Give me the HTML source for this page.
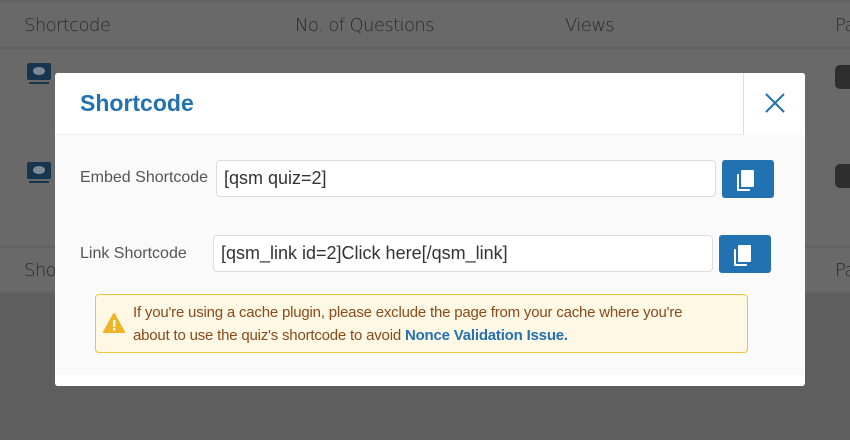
<!DOCTYPE html>
<html><head><style>
*{margin:0;padding:0;box-sizing:border-box}
body{width:850px;height:440px;overflow:hidden;background:#5e5e5e;font-family:"Liberation Sans",sans-serif;position:relative}
.tbl{position:absolute;left:0;top:0;width:850px;height:293px;background:#696969}
.tbl .line{position:absolute;left:0;width:850px;height:2px;background:#626262}
.th{position:absolute;color:#2a2a2a;font-size:18px;font-family:"DejaVu Sans","Liberation Sans",sans-serif;font-weight:200;letter-spacing:-0.6px}
.eye{position:absolute;width:24px;height:17px;background:#163550;border-radius:2px}
.eye:after{content:"";position:absolute;left:6px;top:4px;width:12px;height:8px;border-radius:50%;background:#7d8a96}
.eye:before{content:"";position:absolute;left:2px;top:19px;width:20px;height:2px;background:#163550}
.bub{position:absolute;left:835px;width:20px;height:24px;background:#2e2e2e;border-radius:5px}
.modal{position:absolute;left:55px;top:73px;width:750px;height:313px;background:#fafafa;border-radius:3px;overflow:hidden}
.hdr{position:absolute;left:0;top:0;width:750px;height:62px;background:#fff;border-bottom:1px solid #eee}
.hdr h1{position:absolute;left:25px;top:17px;font-size:23px;color:#2271b1;font-weight:bold}
.close{position:absolute;right:0;top:0;width:62px;height:62px;border-left:1px solid #ddd;background:#fff}
.lbl{position:absolute;font-size:16px;color:#555}
.inp{position:absolute;height:37px;background:#fff;border:1px solid #ddd;border-radius:4px;font-size:18px;color:#333;padding:7px 7px}
.btn{position:absolute;width:52px;height:38px;background:#2271b1;border-radius:3px}
.cp{position:absolute;left:19px;top:10px;width:13px;height:17px;background:#fff;border-radius:1px;box-shadow:-3px 3px 0 -1px #2271b1,-4px 4px 0 0 #fff}
.note{position:absolute;left:40px;top:221px;width:653px;height:59px;background:#fff8e5;border:1px solid #f0c33c;border-radius:4px;font-size:15px;color:#8a4a1a;line-height:23px;padding:6px 0 0 37px;letter-spacing:-0.2px}
.note b{color:#2271b1}
.foot{position:absolute;left:0;bottom:0;width:750px;height:11px;background:#fff}
</style></head><body>
<div class="tbl">
<div class="line" style="top:0"></div>
<div class="line" style="top:47px"></div>
<div class="line" style="top:246px"></div>
<div class="line" style="top:292px"></div>
<div class="th" style="left:24px;top:15px">Shortcode</div>
<div class="th" style="left:295px;top:15px">No. of Questions</div>
<div class="th" style="left:565px;top:15px">Views</div>
<div class="th" style="left:835px;top:15px">Pa</div>
<div class="th" style="left:24px;top:260px">Sho</div>
<div class="th" style="left:835px;top:260px">Pa</div>
<div class="eye" style="left:27px;top:63px"></div>
<div class="eye" style="left:27px;top:162px"></div>
<div class="bub" style="top:65px"></div>
<div class="bub" style="top:164px"></div>
</div>
<div class="modal">
<div class="hdr"><h1>Shortcode</h1>
<div class="close"><svg width="62" height="62"><path d="M22 21L40 39M40 21L22 39" stroke="#2271b1" stroke-width="2" fill="none"/></svg></div></div>
<div class="lbl" style="left:25px;top:96px">Embed Shortcode</div>
<div class="inp" style="left:161px;top:87px;width:500px">[qsm quiz=2]</div>
<div class="btn" style="left:667px;top:87px"><div class="cp"></div></div>
<div class="lbl" style="left:25px;top:172px">Link Shortcode</div>
<div class="inp" style="left:158px;top:162px;width:500px">[qsm_link id=2]Click here[/qsm_link]</div>
<div class="btn" style="left:664px;top:162px"><div class="cp"></div></div>
<div class="note"><svg style="position:absolute;left:7px;top:18px" width="22" height="20"><path d="M11 1L21 19H1Z" fill="#f0b429" stroke="#f0b429" stroke-linejoin="round" stroke-width="2"/><rect x="10" y="7" width="2.4" height="7" fill="#fff"/><rect x="10" y="15" width="2.4" height="2.4" fill="#fff"/></svg>If you're using a cache plugin, please exclude the page from your cache where you're<br>about to use the quiz's shortcode to avoid <b>Nonce Validation Issue.</b></div>
<div class="foot"></div>
</div>
</body></html>
